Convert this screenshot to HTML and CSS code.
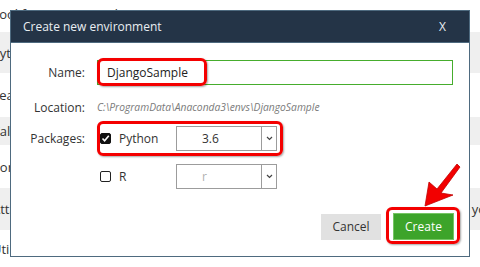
FILE: index.html
```html
<!DOCTYPE html>
<html lang="en">
<head>
    <meta charset="UTF-8">
    <meta name="viewport" content="width=device-width, initial-scale=1.0">
    <title>Create new environment</title>
    <link rel="stylesheet" href="styles.css">
</head>
<body>
    <!-- Page behind the dialog -->
    <div class="page">
        <div class="row r1"><span class="lead">Tool for creating and managing environments</span></div>
        <div class="row r2 alt"><span class="lead">Python</span></div>
        <div class="row r3"><span class="lead">Search</span></div>
        <div class="row r4 alt"><span class="lead">Valid</span></div>
        <div class="row r5"><span class="lead">Port</span></div>
        <div class="row r6 alt"><span class="lead">Attach</span><span class="tail">you</span></div>
        <div class="row r7"><span class="lead">Utility</span></div>
    </div>

    <!-- Dialog -->
    <div class="dialog">
        <div class="dialog-title">
            <span>Create new environment</span>
            <span class="close">X</span>
        </div>

        <div class="form-row name-row">
            <label class="label" for="envName">Name:</label>
            <input id="envName" class="text-input" type="text" value="DjangoSample">
        </div>

        <div class="form-row location-row">
            <span class="label">Location:</span>
            <span class="path">C:\ProgramData\Anaconda3\envs\DjangoSample</span>
        </div>

        <div class="form-row pkg-row">
            <span class="label">Packages:</span>
            <span class="check checked">
                <svg width="9" height="9" viewBox="0 0 9 9"><polyline points="1.5,4.5 3.6,6.8 7.8,1.8" fill="none" stroke="#fff" stroke-width="1.6"/></svg>
            </span>
            <span class="pkg-name">Python</span>
            <div class="combo">
                <span class="combo-value">3.6</span>
                <span class="combo-arrow">
                    <svg width="7" height="5" viewBox="0 0 7 5"><polyline points="1,1 3.5,3.5 6,1" fill="none" stroke="#444" stroke-width="1.2"/></svg>
                </span>
            </div>
        </div>

        <div class="form-row r-row">
            <span class="label"></span>
            <span class="check"></span>
            <span class="pkg-name">R</span>
            <div class="combo">
                <span class="combo-value disabled">r</span>
                <span class="combo-arrow">
                    <svg width="7" height="5" viewBox="0 0 7 5"><polyline points="1,1 3.5,3.5 6,1" fill="none" stroke="#444" stroke-width="1.2"/></svg>
                </span>
            </div>
        </div>

        <div class="dialog-buttons">
            <button class="btn btn-cancel">Cancel</button>
            <button class="btn btn-create">Create</button>
        </div>
    </div>

    <!-- Red annotations drawn over the screenshot -->
    <div class="mark mark-name"></div>
    <div class="mark mark-pkg"></div>
    <div class="mark mark-create"></div>
    <svg class="arrow" width="55" height="60" viewBox="0 0 55 60">
        <polygon points="10,51 14,27 22,34 42,9 45,12 26,38 38,40" fill="#f20000" stroke="#c00000" stroke-width="0.8" stroke-linejoin="round"/>
    </svg>
</body>
</html>
```

FILE: styles.css
```css
body {
    margin: 0;
    width: 480px;
    height: 267px;
    overflow: hidden;
    position: relative;
    font-family: "Open Sans", "DejaVu Sans", sans-serif;
    background-color: #ffffff;
}

/* Background page */
.page {
    display: flex;
    flex-direction: column;
}

.row {
    display: flex;
    align-items: center;
    justify-content: space-between;
    font-size: 13px;
    color: #333333;
    white-space: nowrap;
}

.row.alt {
    background-color: #efefef;
}

.r1 { height: 32px; align-items: flex-start; }
.r1 .lead { margin-top: 5px; }
.r2 { height: 41px; }
.r3 { height: 44px; }
.r4 { height: 28px; }
.r5 { height: 43px; }
.r6 { height: 42px; }
.r7 { height: 37px; }

.lead {
    margin-left: -8px;
}

.tail {
    margin-right: -14px;
}

/* Dialog */
.dialog {
    position: absolute;
    left: 10px;
    top: 10px;
    width: 460px;
    height: 247px;
    box-sizing: border-box;
    border: 1px solid #4e6a7f;
    background-color: #ffffff;
    font-size: 12px;
    color: #333333;
}

.dialog-title {
    height: 32px;
    box-sizing: border-box;
    background-color: #243447;
    border-bottom: 1px solid #4e6a7f;
    color: #e9eef2;
    display: flex;
    align-items: center;
    justify-content: space-between;
    padding: 0 23px 0 12px;
}

.close {
    font-size: 12px;
}

.form-row {
    display: flex;
    align-items: center;
    padding-right: 16px;
}

.label {
    width: 74px;
    margin-right: 12px;
    text-align: right;
    flex-shrink: 0;
}

.name-row {
    margin-top: 17px;
    height: 25px;
}

.text-input {
    flex: 1;
    height: 25px;
    box-sizing: border-box;
    border: 1px solid #46ad2d;
    padding: 0 0 0 9px;
    font-family: inherit;
    font-size: 12px;
    color: #222222;
    outline: none;
}

.location-row {
    margin-top: 10px;
    height: 24px;
}

.path {
    font-size: 10.3px;
    font-style: italic;
    color: #7a7a7a;
}

.pkg-row {
    margin-top: 7px;
    height: 25px;
}

.r-row {
    margin-top: 13px;
    height: 25px;
}

.check {
    width: 11px;
    height: 11px;
    box-sizing: border-box;
    margin-left: 3px;
    border: 1.5px solid #222222;
    border-radius: 2px;
    background-color: #ffffff;
    display: flex;
    align-items: center;
    justify-content: center;
}

.check.checked {
    background-color: #111111;
    border-color: #111111;
}

.pkg-name {
    width: 57px;
    margin-left: 8px;
}

.combo {
    width: 101px;
    height: 25px;
    box-sizing: border-box;
    border: 1px solid #9c9c9c;
    display: flex;
}

.combo-value {
    flex: 1;
    padding-left: 25px;
    display: flex;
    align-items: center;
}

.combo-value.disabled {
    color: #b0b0b0;
}

.combo-arrow {
    width: 14px;
    border-left: 1px solid #9c9c9c;
    display: flex;
    align-items: center;
    justify-content: center;
}

.dialog-buttons {
    display: flex;
    justify-content: flex-end;
    align-items: center;
    gap: 12px;
    margin-top: 24px;
    padding-right: 15px;
}

.btn {
    height: 27px;
    border: none;
    font-family: inherit;
    font-size: 12px;
    padding: 0;
}

.btn-cancel {
    width: 60px;
    height: 26px;
    background-color: #e1e1e1;
    color: #333333;
}

.btn-create {
    width: 61px;
    background-color: #3da42a;
    border: 1px solid #76c563;
    color: #ffffff;
}

/* Annotations */
.mark {
    position: absolute;
    box-sizing: border-box;
    border: 3px solid #f40000;
    border-radius: 6px;
    box-shadow: 1px 1px 2px rgba(0, 0, 0, 0.35);
}

.mark-name {
    left: 97px;
    top: 58px;
    width: 110px;
    height: 28px;
}

.mark-pkg {
    left: 97px;
    top: 121px;
    width: 186px;
    height: 35px;
}

.mark-create {
    left: 386px;
    top: 207px;
    width: 74px;
    height: 37px;
}

.arrow {
    position: absolute;
    left: 415px;
    top: 155px;
}
```
